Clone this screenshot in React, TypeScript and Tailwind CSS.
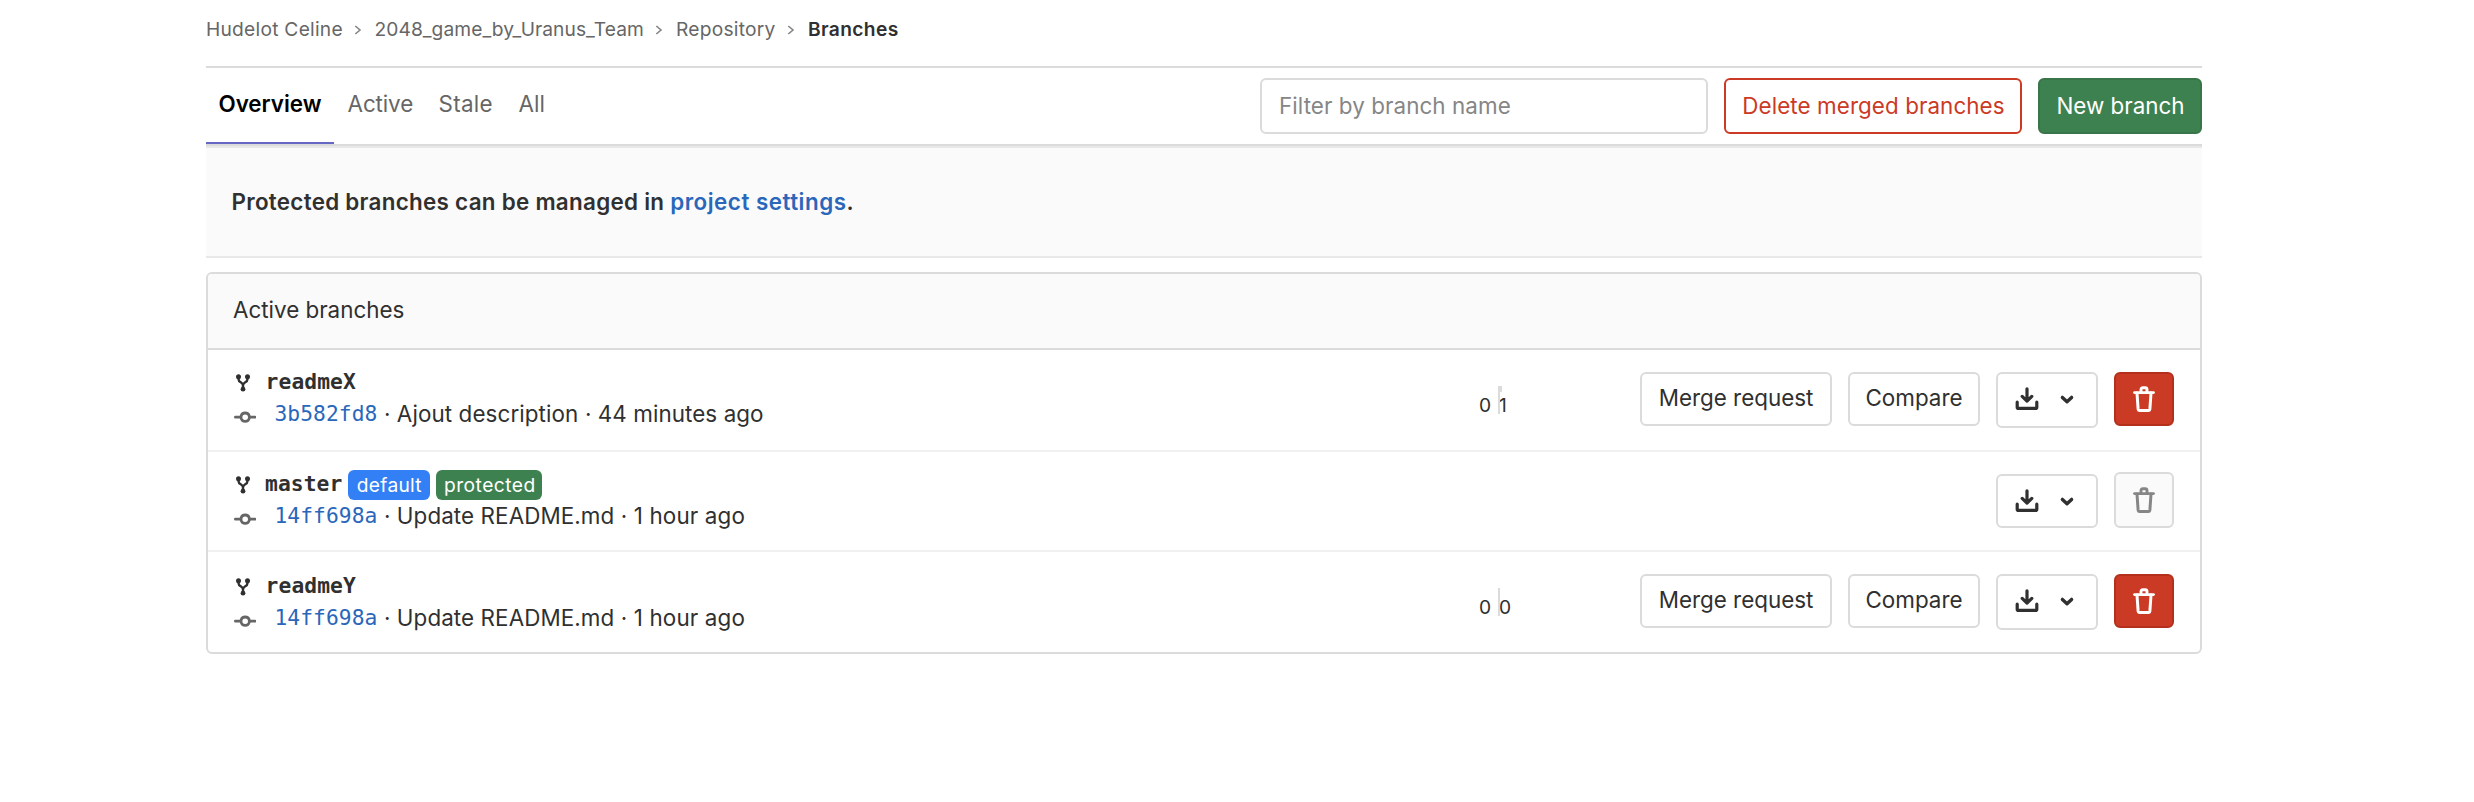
import type { ReactNode } from "react";

function CrumbArrow() {
  return (
    <svg className="mt-0.5 h-3 w-2 shrink-0" viewBox="0 0 8 12" fill="none" stroke="#858585" strokeWidth="1.6">
      <path d="M1.3 2l4.7 4-4.7 4" />
    </svg>
  );
}

function ForkIcon() {
  return (
    <svg className="h-[18px] w-4 shrink-0" viewBox="0 0 16 18" fill="none">
      <path d="M3.6 3v2.4C3.6 8.6 8 8 8 11.4M12.4 3v2.4C12.4 8.6 8 8 8 11.4V15" stroke="#303030" strokeWidth="2.4" />
      <circle cx="3.5" cy="2.7" r="2.5" fill="#303030" />
      <circle cx="12.5" cy="2.7" r="2.5" fill="#303030" />
      <circle cx="8" cy="15.2" r="2.4" fill="#303030" />
    </svg>
  );
}

function CommitIcon() {
  return (
    <svg className="h-[22.4px] w-[22.4px] shrink-0" viewBox="0 0 16 16" fill="#666666">
      <path
        fillRule="evenodd"
        d="M8 10a2 2 0 1 0 0-4 2 2 0 0 0 0 4zm3.876-1.008a4.002 4.002 0 0 1-7.752 0A1.01 1.01 0 0 1 4 9H1a1 1 0 1 1 0-2h3c.042 0 .083.003.124.008a4.002 4.002 0 0 1 7.752 0A1.01 1.01 0 0 1 12 7h3a1 1 0 0 1 0 2h-3c-.042 0-.083-.003-.124-.008z"
      />
    </svg>
  );
}

function DownloadIcon() {
  return (
    <svg className="h-6 w-6 shrink-0" viewBox="0 0 24 24" fill="none" stroke="#303030" strokeWidth="3.2" strokeLinecap="round" strokeLinejoin="round">
      <path d="M12 1.8v12.2M7.2 9.4l4.8 4.8 4.8-4.8M2.2 15.2v5c0 .8.4 1.2 1.2 1.2h17.2c.8 0 1.2-.4 1.2-1.2v-5" />
    </svg>
  );
}

function ChevronDown() {
  return (
    <svg className="h-3 w-4 shrink-0" viewBox="0 0 16 12" fill="none" stroke="#303030" strokeWidth="3.4" strokeLinecap="round" strokeLinejoin="round">
      <path d="M3.4 3.4L8 7.8l4.6-4.4" />
    </svg>
  );
}

function TrashIcon() {
  return (
    <svg className="h-[26px] w-[22px] shrink-0" viewBox="0 0 22 26" fill="none" stroke="currentColor" strokeLinecap="round" strokeLinejoin="round">
      <path d="M1.5 6.6h19" strokeWidth="2.9" />
      <path d="M8 6V3.6c0-1.2.7-1.9 1.8-1.9h2.4c1.1 0 1.8.7 1.8 1.9V6" strokeWidth="2.9" />
      <path d="M4 7l1.1 15.9c.1 1 .6 1.5 1.5 1.5h8.8c.9 0 1.4-.5 1.5-1.5L18 7" strokeWidth="3" />
    </svg>
  );
}

type Branch = {
  name: string;
  sha: string;
  message: ReactNode;
  age: ReactNode;
  ahead?: string;
  isDefault?: boolean;
  rowClass: string;
  infoClass: string;
  nameClass: string;
};

const branches: Branch[] = [
  {
    name: "readmeX",
    sha: "3b582fd8",
    message: <span className="tracking-[0.1px]">Ajout description</span>,
    age: <span className="tracking-[0.076px]">44 minutes ago</span>,
    ahead: "1",
    rowClass: "h-[102px] border-b-2",
    infoClass: "pt-4",
    nameClass: "pl-px",
  },
  {
    name: "master",
    sha: "14ff698a",
    message: <span className="tracking-[0.09px]">Update README.md</span>,
    age: <span className="tracking-[0.15px]">1 hour ago</span>,
    isDefault: true,
    rowClass: "h-[100px] border-b-2",
    infoClass: "pt-4",
    nameClass: "pl-[0.4px]",
  },
  {
    name: "readmeY",
    sha: "14ff698a",
    message: <span className="tracking-[0.09px]">Update README.md</span>,
    age: <span className="tracking-[0.15px]">1 hour ago</span>,
    ahead: "0",
    rowClass: "h-[100px]",
    infoClass: "pt-[18px]",
    nameClass: "pl-px",
  },
];

function Dot() {
  return <span className="w-[19.4px] shrink-0 text-center">·</span>;
}

function BranchRow({ b }: { b: Branch }) {
  return (
    <li className={`flex items-start border-[#f0f0f0] pl-[26px] pr-[26px] ${b.rowClass}`}>
      <div className={`flex flex-col ${b.infoClass}`}>
        <div className="flex h-8 items-center">
          <span className="flex w-[30.6px] pl-px pt-0.5">
            <ForkIcon />
          </span>
          <span className={`font-['DejaVu_Sans_Mono',monospace] text-[21.28px] leading-8 font-bold tracking-[0.09px] ${b.nameClass}`}>{b.name}</span>
          {b.isDefault && (
            <span className="mt-0.5 ml-1.5 flex gap-1.5 text-[19.2px] leading-[30px] text-white">
              <span className="w-[82px] rounded-md bg-[#337ff5] text-center tracking-[0.286px]">default</span>
              <span className="w-[106px] rounded-md bg-[#3e8150] pl-px text-center tracking-[0.49px]">protected</span>
            </span>
          )}
        </div>
        <div className="flex h-8 items-center leading-8">
          <span className="flex w-[40.4px] pt-1.5">
            <CommitIcon />
          </span>
          <a className="font-['DejaVu_Sans_Mono',monospace] text-[21.28px] leading-8 tracking-[0.08px] text-[#2a67bb]">{b.sha}</a>
          <Dot />
          {b.message}
          <Dot />
          {b.age}
        </div>
      </div>

      <div className="ml-auto flex items-start">
        {b.ahead !== undefined && (
          <>
            <div className="mt-9 flex w-[162px] text-[19.2px]">
              <span className="w-5 pt-[9px] pl-px leading-5">0</span>
              <span className="relative h-7 w-0.5 bg-[#dbdbdb]">
                {b.ahead === "1" && <span className="absolute top-0 left-0 h-1.5 w-1 bg-[#dbdbdb]" />}
              </span>
              <span className="-ml-px pt-[9px] leading-5">{b.ahead}</span>
            </div>
            <button className="mt-[22px] mr-4 h-[54px] w-48 rounded-md border-2 border-[#dbdbdb] pb-0.5 leading-8">Merge request</button>
            <button className="mt-[22px] mr-4 h-[54px] w-[132px] rounded-md border-2 border-[#dbdbdb] pb-0.5 leading-8">Compare</button>
          </>
        )}
        <button
          className={`mt-[22px] mr-4 flex w-[102px] items-start gap-5 rounded-md border-2 border-[#dbdbdb] pt-[13px] pl-[17px] ${b.isDefault ? "h-[54px]" : "h-14"}`}
        >
          <DownloadIcon />
          <span className="pt-[7px]">
            <ChevronDown />
          </span>
        </button>
        <button
          className={`flex w-[60px] items-center justify-center rounded-md border-2 ${
            b.isDefault ? "mt-5 h-14 border-[#dbdbdb] bg-[#fafafa] text-[#868686]" : "mt-[22px] h-[54px] border-[#b5301c] bg-[#cb3a24] text-white"
          }`}
        >
          <TrashIcon />
        </button>
      </div>
    </li>
  );
}

export default function App() {
  return (
    <div className="min-h-[802px] bg-white pr-[272px] pl-[206px] font-[Inter,sans-serif] text-[22.4px] text-[#303030]">
      <nav className="flex h-[68px] items-center border-b-2 border-[#dbdbdb] pb-2 text-[19.2px] whitespace-nowrap text-[#666666]">
        <span className="w-[147.5px] tracking-[0.25px]">Hudelot Celine</span>
        <CrumbArrow />
        <span className="ml-[13px] w-[280px] tracking-[0.058px]">2048_game_by_Uranus_Team</span>
        <CrumbArrow />
        <span className="ml-[13.5px] w-[111px] tracking-[0.23px]">Repository</span>
        <CrumbArrow />
        <span className="ml-[13px] font-semibold tracking-[0.36px] text-[#303030]">Branches</span>
      </nav>

      <div className="flex h-[78px] items-start border-b-2 border-[#dbdbdb]">
        <div className="flex h-[76px] leading-[72px] text-[#666666]">
          <a className="w-32 border-b-2 border-[#6666c4] text-center font-semibold tracking-[0px] text-black">Overview</a>
          <a className="ml-[13.6px] w-[91px] tracking-[-0.12px]">Active</a>
          <a className="w-20 tracking-[0.3px]">Stale</a>
          <a>All</a>
        </div>
        <div className="mt-2.5 ml-auto flex gap-4">
          <input
            className="h-14 w-[448px] rounded-md border-2 border-[#dbdbdb] pr-4 pb-0.5 pl-[17px] tracking-[0.08px] placeholder:text-[#868686] placeholder:opacity-100"
            placeholder="Filter by branch name"
          />
          <button className="h-14 w-[298px] rounded-md border-2 border-[#cb3a24] pl-px tracking-[0.08px] text-[#cb3a24]">Delete merged branches</button>
          <button className="h-14 w-[164px] rounded-md border-2 border-[#3a7549] bg-[#3e8150] pl-px text-white">New branch</button>
        </div>
      </div>

      <div className="flex h-28 items-center border-y-2 border-[#e8e8e8] bg-[#fafafa] pl-[25.5px] font-semibold whitespace-pre">
        <span className="tracking-[0.288px]">Protected branches can be managed in </span>
        <a className="tracking-[0.5px] text-[#2a67bb]">project settings</a>
        <span>.</span>
      </div>

      <section className="mt-3.5 overflow-hidden rounded-md border-2 border-[#dbdbdb]">
        <h2 className="flex h-[76px] items-center border-b-2 border-[#dbdbdb] bg-[#fafafa] pb-0.5 pl-[25px]">Active branches</h2>
        <ul>
          {branches.map((b) => (
            <BranchRow key={b.name} b={b} />
          ))}
        </ul>
      </section>
    </div>
  );
}
